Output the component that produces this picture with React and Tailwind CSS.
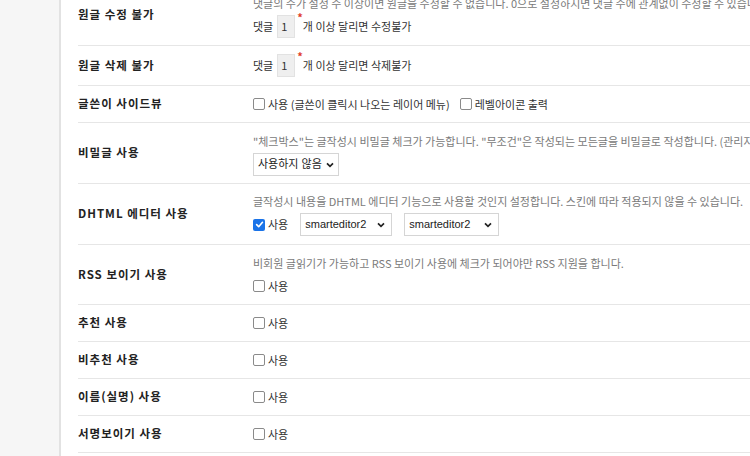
import React from 'react';

const font = { fontFamily: '"Noto Sans CJK KR", "Noto Sans", sans-serif' };

function Check({ checked, label }) {
  return (
    <label className="flex items-center gap-[3px]">
      {checked ? (
        <span className="w-[12px] h-[12px] rounded-[2px] bg-[#1a73e8] flex items-center justify-center">
          <svg width="9" height="9" viewBox="0 0 10 10">
            <path d="M1.8 5.2 L4.1 7.4 L8.3 2.6" fill="none" stroke="#fff" strokeWidth="1.8" strokeLinecap="round" strokeLinejoin="round" />
          </svg>
        </span>
      ) : (
        <span className="w-[12px] h-[12px] rounded-[2px] border border-[#8a8a8a] bg-white"></span>
      )}
      <span className="text-[11px] text-[#333]">{label}</span>
    </label>
  );
}

function Select({ value, width }) {
  return (
    <div className={`h-[23px] border border-[#d5d5d5] bg-white flex items-center justify-between gap-[4px] pl-[4px] pr-[6px] ${width}`}>
      <span className="text-[11px] text-[#222] whitespace-nowrap" style={{ fontFamily: '"Liberation Sans", "Noto Sans CJK KR", sans-serif' }}>{value}</span>
      <svg width="8" height="6" viewBox="0 0 8 6" className="shrink-0">
        <path d="M1 1.3 L4 4.3 L7 1.3" fill="none" stroke="#222" strokeWidth="1.7" />
      </svg>
    </div>
  );
}

function CountInput({ after }) {
  return (
    <div className="flex items-center text-[11px] text-[#333]">
      <span className="mr-[4px]">댓글</span>
      <span className="w-[18px] h-[23px] bg-[#efefef] border border-[#e2e2e2] flex items-center pl-[3px] text-[11px] text-[#333]">1</span>
      <span className="self-start -mt-[3px] text-[#e03c2c] text-[11px] font-bold leading-none pl-[2px]">*</span>
      <span>{after}</span>
    </div>
  );
}

function Row({ label, desc, children, py }) {
  return (
    <div className="flex border-b border-[#e6e6e6]">
      <div className="w-[175px] shrink-0 flex items-center text-[11.5px] font-bold text-[#222] tracking-[1px]">{label}</div>
      <div className={`flex-1 min-w-0 flex flex-col justify-center ${py}`}>
        {desc && (
          <div className="h-[16px] leading-[16px] text-[11px] text-[#7a7a7a] whitespace-nowrap overflow-hidden mb-[4px]">{desc}</div>
        )}
        <div className="h-[23px] flex items-center gap-[10px]">{children}</div>
      </div>
    </div>
  );
}

export default function App() {
  return (
    <div className="w-[750px] h-[456px] overflow-hidden flex bg-white" style={font}>
      <div className="w-[61px] shrink-0 bg-[#f6f6f6] border-r-2 border-[#e2e2e2]"></div>
      <div className="flex-1 min-w-0 pl-[17px] overflow-hidden">
        <div className="-mt-[15px] w-[900px]">
          <Row label="원글 수정 불가" desc="댓글의 수가 설정 수 이상이면 원글을 수정할 수 없습니다. 0으로 설정하시면 댓글 수에 관계없이 수정할 수 있습니다." py="pt-[10px] pb-[7px] h-[60px]">
            <CountInput after="개 이상 달리면 수정불가" />
          </Row>
          <Row label="원글 삭제 불가" py="py-[8px] h-[39px]">
            <CountInput after="개 이상 달리면 삭제불가" />
          </Row>
          <Row label="글쓴이 사이드뷰" py="py-[6px] h-[36px]">
            <Check label="사용 (글쓴이 클릭시 나오는 레이어 메뉴)" />
            <Check label="레벨아이콘 출력" />
          </Row>
          <Row label="비밀글 사용" desc={'"체크박스"는 글작성시 비밀글 체크가 가능합니다. "무조건"은 작성되는 모든글을 비밀글로 작성합니다. (관리자는 체크박스로 출력합니다.) 스킨에 따라 적용되지 않을 수 있습니다.'} py="pt-[10px] pb-[7px] h-[60px]">
            <Select value="사용하지 않음" width="w-[86px]" />
          </Row>
          <Row label="DHTML 에디터 사용" desc="글작성시 내용을 DHTML 에디터 기능으로 사용할 것인지 설정합니다. 스킨에 따라 적용되지 않을 수 있습니다." py="pt-[9px] pb-[8px] h-[60px]">
            <div className="flex items-center gap-[12px]">
              <Check checked label="사용" />
              <Select value="smarteditor2" width="w-[92px]" />
              <Select value="smarteditor2" width="w-[95px]" />
            </div>
          </Row>
          <Row label="RSS 보이기 사용" desc="비회원 글읽기가 가능하고 RSS 보이기 사용에 체크가 되어야만 RSS 지원을 합니다." py="pt-[10px] pb-[7px] h-[59px]">
            <Check label="사용" />
          </Row>
          <Row label="추천 사용" py="py-[6px] h-[36px]">
            <Check label="사용" />
          </Row>
          <Row label="비추천 사용" py="py-[6px] h-[36px]">
            <Check label="사용" />
          </Row>
          <Row label="이름(실명) 사용" py="py-[6px] h-[36px]">
            <Check label="사용" />
          </Row>
          <Row label="서명보이기 사용" py="py-[6px] h-[36px]">
            <Check label="사용" />
          </Row>
        </div>
      </div>
    </div>
  );
}
